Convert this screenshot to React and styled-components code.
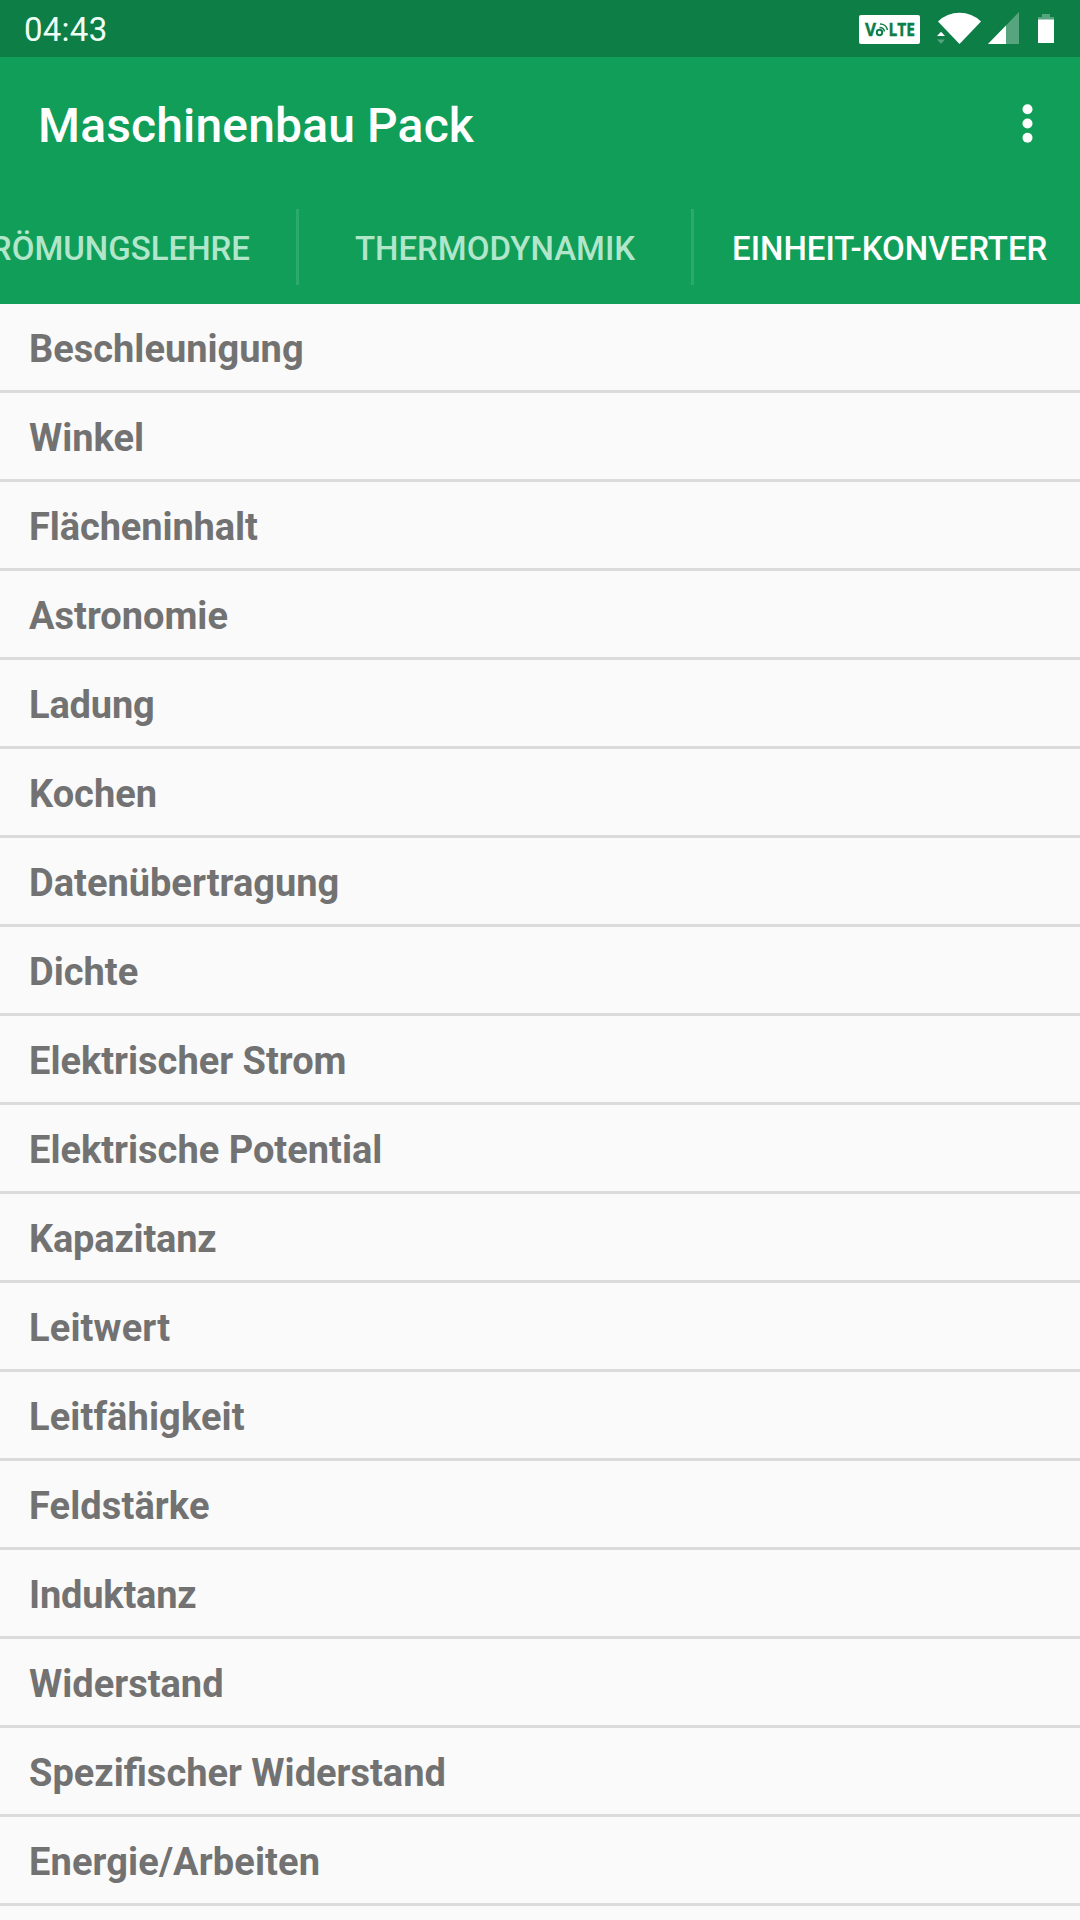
import styled, { createGlobalStyle } from 'styled-components';

const GlobalStyle = createGlobalStyle`
  * {
    box-sizing: border-box;
  }
  body {
    background-color: #fafafa;
    font-family: Roboto, "Liberation Sans", sans-serif;
    margin: 0;
    overflow: hidden;
  }
`;

const Screen = styled.div`
  display: flex;
  flex-direction: column;
  height: 1920px;
  overflow: hidden;
  width: 1080px;
`;

const StatusBar = styled.div`
  align-items: center;
  background-color: #0d7e46;
  color: #effff6;
  display: flex;
  flex: none;
  height: 57px;
  justify-content: space-between;
  padding-left: 24px;
`;

const Clock = styled.span`
  font-size: 33px;
  letter-spacing: 0.25px;
  line-height: 38px;
  padding-top: 2px;
`;

const StatusIcons = styled.svg`
  display: block;
  height: 57px;
  width: 240px;
`;

const Toolbar = styled.header`
  align-items: center;
  background-color: #119e58;
  color: #fff;
  display: flex;
  flex: none;
  height: 133px;
  justify-content: space-between;
  padding: 0 35px 0 38px;
`;

const Title = styled.h1`
  font-size: 48px;
  font-weight: 500;
  letter-spacing: 0.15px;
  line-height: 56px;
  margin: 0;
  padding-top: 4px;
`;

const MenuButton = styled.button`
  background: none;
  border: 0;
  display: block;
  height: 133px;
  padding: 0;
  width: 35px;
  svg {
    display: block;
  }
`;

const Tabs = styled.nav`
  background-color: #119e58;
  display: flex;
  flex: none;
  height: 114px;
  justify-content: flex-end;
  padding: 19px 0;
`;

const Tab = styled.a`
  align-items: center;
  border-left: ${({ $divider }) => ($divider ? '3px solid #2baa6b' : '0')};
  color: ${({ $active }) => ($active ? '#fff' : '#b2e6cb')};
  display: flex;
  flex: none;
  font-size: 33px;
  font-weight: 500;
  height: 76px;
  justify-content: ${({ $align }) => $align || 'center'};
  padding: ${({ $pad }) => $pad || '3px 0 0'};
  white-space: nowrap;
  width: ${({ $width }) => $width}px;
`;

const List = styled.ul`
  list-style: none;
  margin: 0;
  padding: 0;
`;

const Row = styled.li`
  border-bottom: 3px solid #dbdbdb;
  color: #727272;
  font-size: 38px;
  font-weight: 700;
  height: 89px;
  letter-spacing: ${({ $tracking }) => ($tracking ? `${$tracking}px` : 'normal')};
  line-height: 44px;
  padding: 23px 0 0 29px;
`;

const units = [
  { name: 'Beschleunigung' },
  { name: 'Winkel' },
  { name: 'Flächeninhalt', tracking: -0.1 },
  { name: 'Astronomie' },
  { name: 'Ladung', tracking: -0.15 },
  { name: 'Kochen' },
  { name: 'Datenübertragung' },
  { name: 'Dichte' },
  { name: 'Elektrischer Strom' },
  { name: 'Elektrische Potential' },
  { name: 'Kapazitanz', tracking: -0.2 },
  { name: 'Leitwert', tracking: 0.15 },
  { name: 'Leitfähigkeit', tracking: 0.1 },
  { name: 'Feldstärke', tracking: 0.1 },
  { name: 'Induktanz', tracking: -0.2 },
  { name: 'Widerstand' },
  { name: 'Spezifischer Widerstand' },
  { name: 'Energie/Arbeiten', tracking: 0.12 },
];

const Icons = () => (
  <StatusIcons viewBox="0 0 240 57" aria-hidden="true">
    {/* VoLTE badge */}
    <rect x="19" y="15" width="61" height="29" rx="2" fill="#fff" />
    <g fill="#0d7e46" stroke="#0d7e46" strokeWidth="0.4" fontFamily="Open Sans, sans-serif" fontWeight="700" fontSize="17">
      <text x="25" y="36">V</text>
      <text x="48.5" y="36" textLength="26.5" lengthAdjust="spacingAndGlyphs">LTE</text>
    </g>
    <g fill="none" stroke="#0d7e46">
      <circle cx="39.5" cy="32.5" r="2.7" strokeWidth="2" />
      <path d="M39.5 27.5a5 5 0 0 1 5 4" strokeWidth="1.5" />
      <path d="M40 24a7.5 7.5 0 0 1 7.5 6" strokeWidth="1.5" />
    </g>
    {/* wifi */}
    <path d="M98 21.5Q107 12.8 119.5 12.8T141 21.5L119.5 44Z" fill="#fff" />
    <path d="M97 36L101 31.8L105 36Z" fill="#fff" />
    <path d="M97 39.5H105L101 43.7Z" fill="#56a57e" />
    {/* signal */}
    <path d="M179 12V44H148Z" fill="#56a57e" />
    <path d="M166 25.5V44H148Z" fill="#fff" />
    {/* battery */}
    <path d="M202 14H210V17H214V20H198V17H202Z" fill="#56a57e" />
    <path d="M198 19.5H214V43H198Z" fill="#fff" />
  </StatusIcons>
);

const App = () => {
  return (
    <>
      <GlobalStyle />
      <Screen>
        <StatusBar>
          <Clock>04:43</Clock>
          <Icons />
        </StatusBar>
        <Toolbar>
          <Title>Maschinenbau Pack</Title>
          <MenuButton aria-label="Menü">
            <svg width="35" height="133" fill="#fff">
              <circle cx="17.5" cy="52.3" r="5" />
              <circle cx="17.5" cy="66.5" r="5" />
              <circle cx="17.5" cy="80.8" r="5" />
            </svg>
          </MenuButton>
        </Toolbar>
        <Tabs>
          <Tab $width={296} $align="flex-end" $pad="3px 46px 0 0">STRÖMUNGSLEHRE</Tab>
          <Tab $width={395} $divider>THERMODYNAMIK</Tab>
          <Tab $width={389} $divider $active $align="flex-start" $pad="3px 0 0 38px">
            EINHEIT-KONVERTER
          </Tab>
        </Tabs>
        <List>
          {units.map(({ name, tracking }) => (
            <Row key={name} $tracking={tracking}>{name}</Row>
          ))}
        </List>
      </Screen>
    </>
  );
};

export default App;
